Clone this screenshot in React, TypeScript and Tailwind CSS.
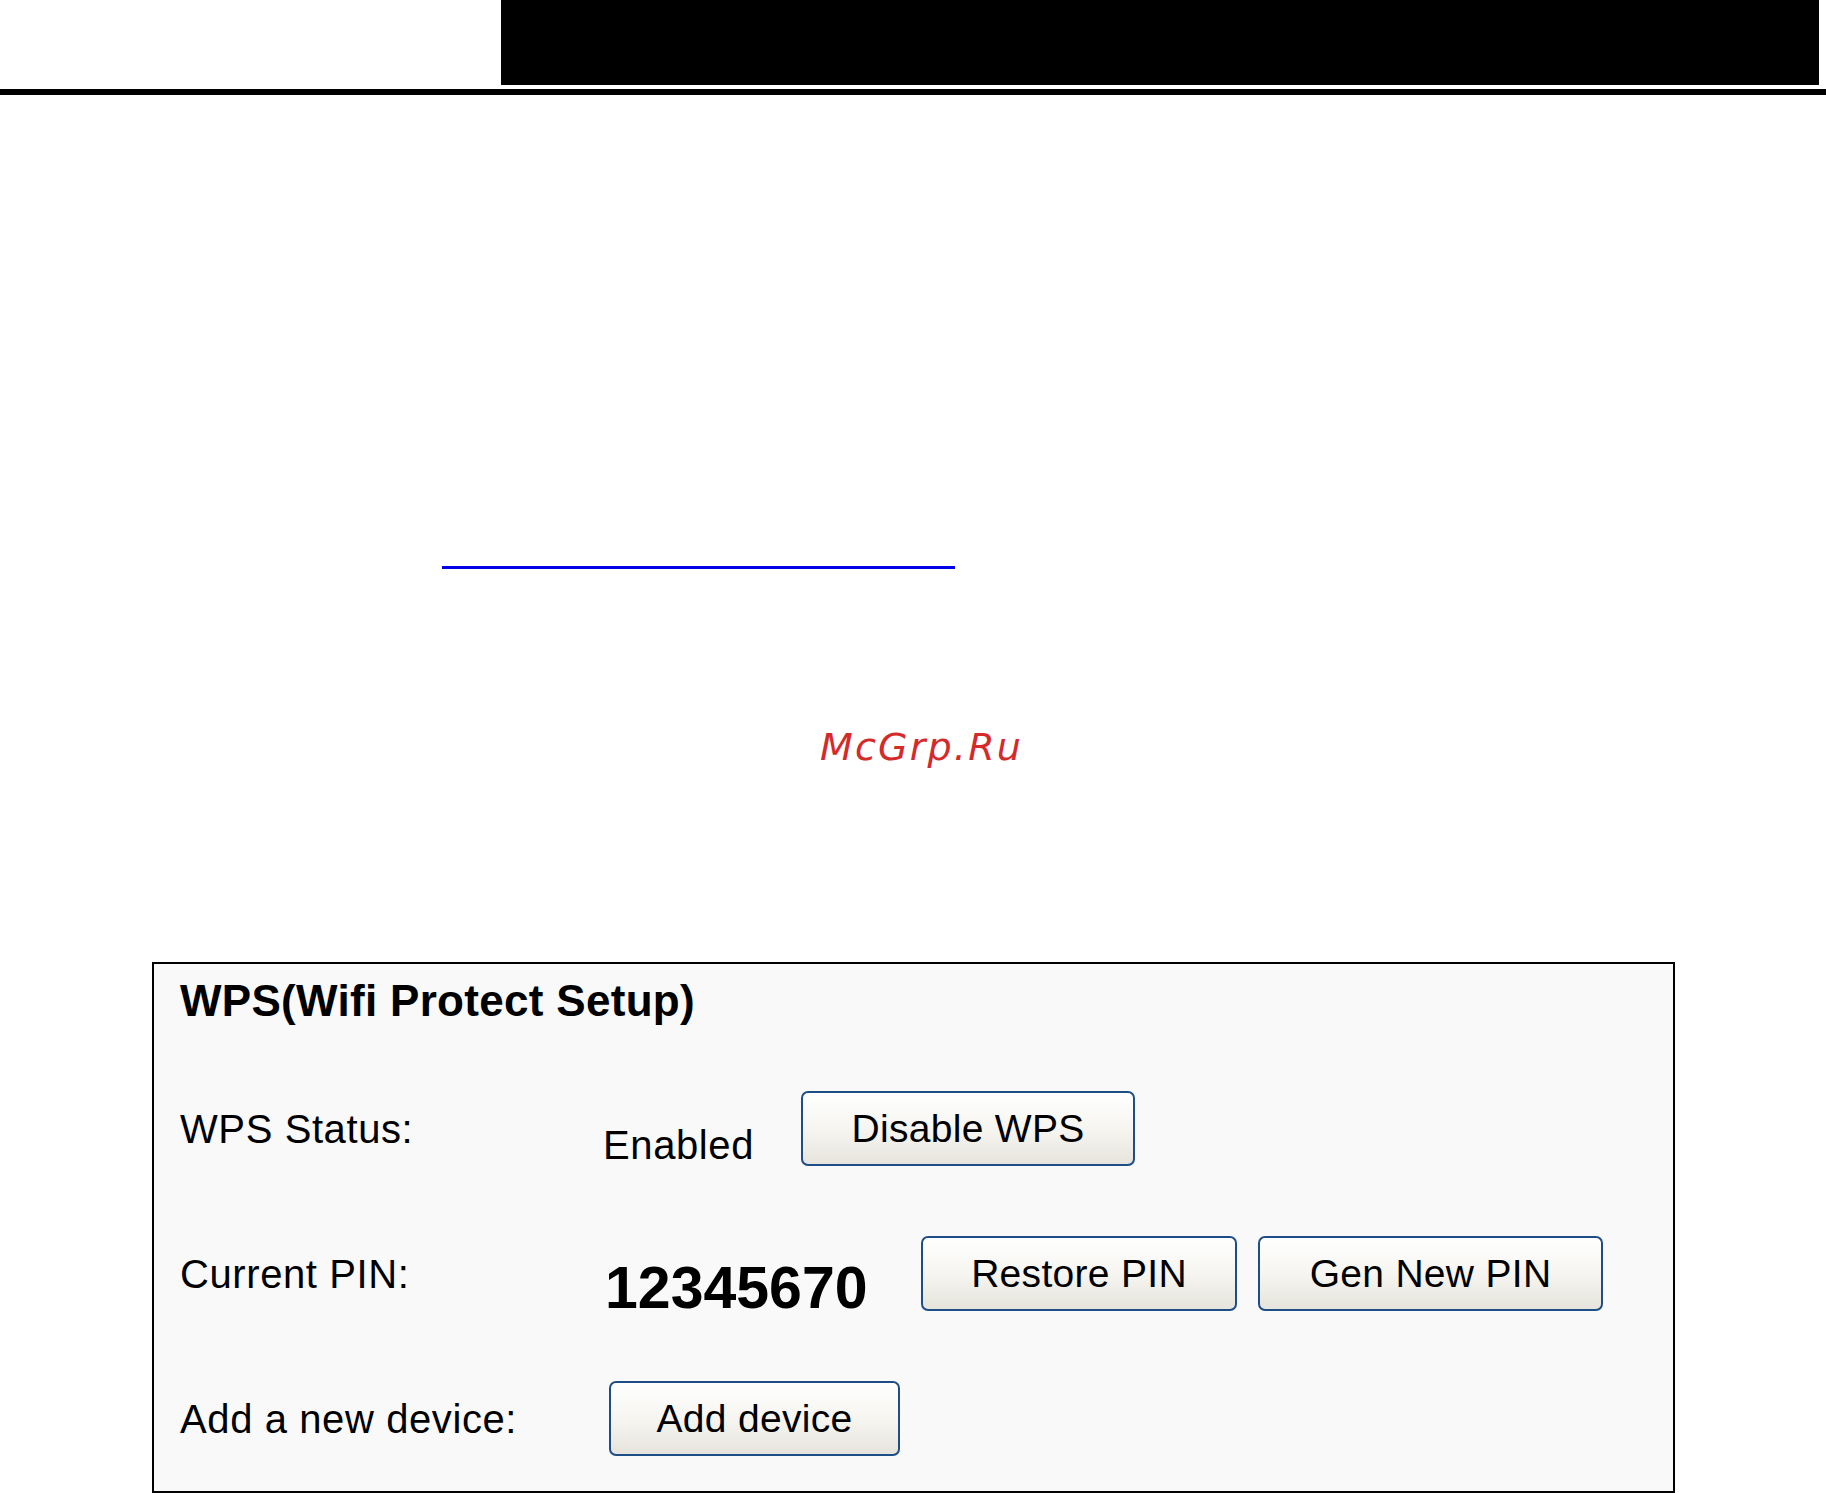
const sans = { fontFamily: '"Liberation Sans", Arial, sans-serif' };

function XpButton({ label, width }: { label: string; width: string }) {
  return (
    <button
      className={`${width} h-[75px] shrink-0 rounded-[7px] border-[2.5px] border-[#1d4e86] bg-gradient-to-b from-[#ffffff] via-[#f6f5f1] to-[#e6e4dc] text-[39px] leading-none tracking-[0.3px] text-black`}
    >
      {label}
    </button>
  );
}

export default function App() {
  return (
    <div className="relative h-[1493px] w-[1826px] overflow-hidden bg-white" style={sans}>
      {/* header strip */}
      <div className="flex">
        <div className="w-[501px]" />
        <div className="h-[85px] w-[1318px] bg-black" />
      </div>
      <div className="mt-[4px] h-[6px] w-full bg-black" />

      {/* link underline */}
      <div className="ml-[442px] mt-[471px] h-[3px] w-[513px] bg-[#0000e6]" />

      {/* watermark */}
      <div
        className="ml-[820px] mt-[155px] text-[38px] italic leading-[46px] tracking-[2.2px] text-[#d42a2a]"
        style={{ fontFamily: '"DejaVu Sans", sans-serif' }}
      >
        McGrp.Ru
      </div>

      {/* WPS panel */}
      <div className="ml-[152px] mt-[192px] h-[531px] w-[1523px] border-2 border-black bg-[#f9f9f9] pl-[26px] pt-[12px]">
        <div className="text-[44px] font-bold leading-[50px] tracking-[0.3px] text-black">WPS(Wifi Protect Setup)</div>

        <div className="mt-[65px] flex flex-col gap-[70px] text-[40px] leading-[46px] tracking-[0.6px] text-black">
          <div className="flex h-[75px] items-center">
            <div className="w-[423px] shrink-0">WPS Status:</div>
            <div className="mt-[32px] w-[198px] shrink-0">Enabled</div>
            <XpButton label="Disable WPS" width="w-[334px]" />
          </div>

          <div className="flex h-[75px] items-center">
            <div className="w-[423px] shrink-0">Current PIN:</div>
            <div className="mt-[28px] w-[318px] shrink-0 pl-[2px] text-[59px] font-bold leading-[64px] tracking-[0px]">12345670</div>
            <XpButton label="Restore PIN" width="w-[316px]" />
            <div className="w-[21px] shrink-0" />
            <XpButton label="Gen New PIN" width="w-[345px]" />
          </div>

          <div className="flex h-[75px] items-center">
            <div className="w-[429px] shrink-0">Add a new device:</div>
            <XpButton label="Add device" width="w-[291px]" />
          </div>
        </div>
      </div>
    </div>
  );
}
